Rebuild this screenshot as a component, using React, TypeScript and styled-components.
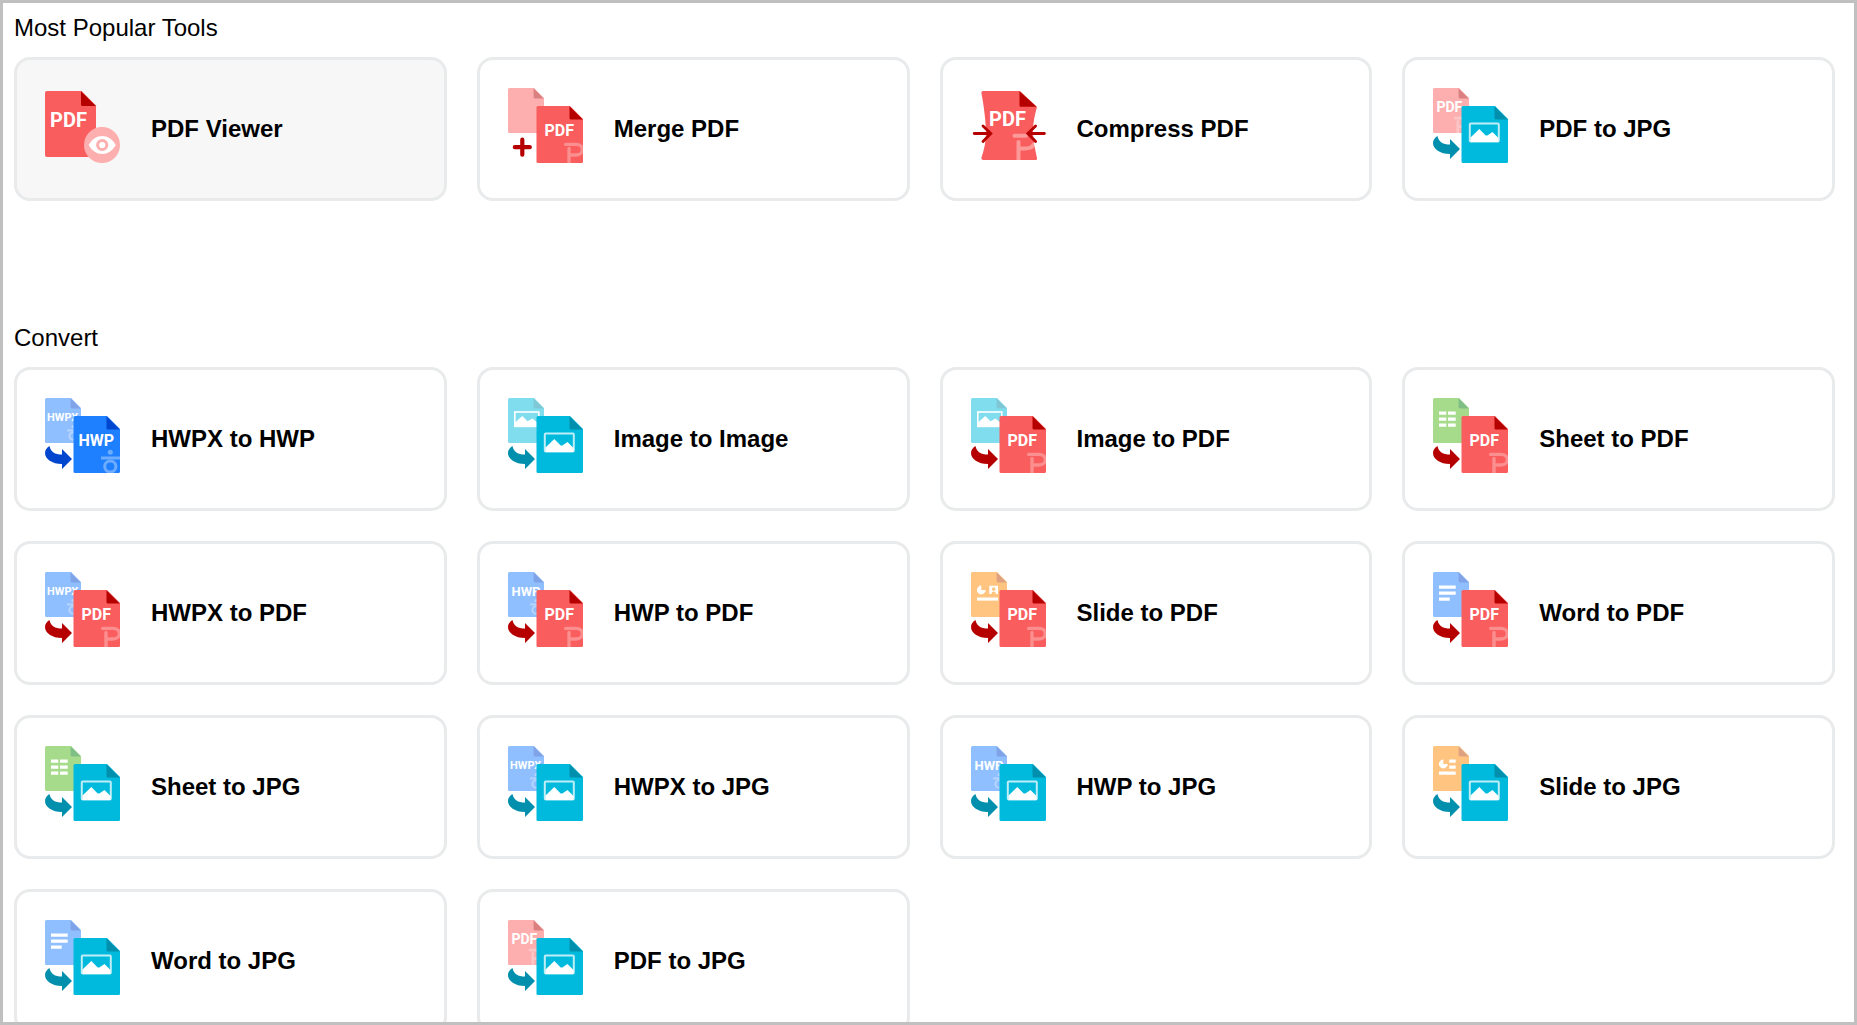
import React from "react";
import styled, { createGlobalStyle } from "styled-components";

const GlobalStyle = createGlobalStyle`
  *, *::before, *::after {
    box-sizing: border-box;
  }
  body {
    margin: 0;
    background: #ffffff;
    color: #000000;
    font-family: "Liberation Sans", Arial, Helvetica, sans-serif;
  }
`;

const Frame = styled.main`
  display: flex;
  flex-direction: column;
  gap: 122px;
  height: 100vh;
  overflow: hidden;
  padding: 10px 19px 0 11px;
  border: 3px solid #c0c0c0;
  background: #ffffff;
`;

const Section = styled.section`
  display: flex;
  flex-direction: column;
  gap: 14px;
`;

const Heading = styled.h2`
  margin: 0;
  font-size: 24px;
  font-weight: 400;
  line-height: 30px;
`;

const Grid = styled.ul`
  display: grid;
  grid-template-columns: repeat(4, minmax(0, 1fr));
  gap: 30px;
  margin: 0;
  padding: 0;
  list-style: none;
`;

const Card = styled.a<{ $active?: boolean }>`
  display: flex;
  align-items: center;
  gap: 31px;
  padding: 28px;
  border: 3px solid #e8eaeb;
  border-radius: 16px;
  background: ${(p) => (p.$active ? "#f7f7f7" : "#ffffff")};
  color: inherit;
  text-decoration: none;

  &:hover {
    background: #f7f7f7;
  }
`;

const IconBox = styled.span`
  display: flex;
  flex: none;
  padding-bottom: 7px;
`;

const Label = styled.span`
  font-size: 24px;
  font-weight: 700;
  line-height: 30px;
`;

const Mark = styled.text`
  font-family: Roboto, "Open Sans", sans-serif;
  font-weight: 700;
  fill: #ffffff;
`;

type Front = "hwp" | "jpg" | "pdf";
type Back = "hwpx" | "hwp" | "image" | "sheet" | "slide" | "slideList" | "word" | "pdf" | "blank";

const frontColors: Record<Front, [string, string]> = {
  hwp: ["#1f80ff", "#0046cf"],
  jpg: ["#00badd", "#008fac"],
  pdf: ["#fa5d5d", "#b60000"],
};

const backColors: Record<Back, [string, string]> = {
  hwpx: ["#8fbfff", "#80a2e7"],
  hwp: ["#8fbfff", "#80a2e7"],
  word: ["#8fbfff", "#80a2e7"],
  image: ["#80ddee", "#7fc7d4"],
  sheet: ["#a6db8c", "#7fbf86"],
  slide: ["#ffc480", "#dfa281"],
  slideList: ["#ffc480", "#dfa281"],
  pdf: ["#fdaeae", "#da8080"],
  blank: ["#fdaeae", "#da8080"],
};

const Hieut = () => (
  <g opacity="0.35">
    <circle cx="65.3" cy="54.3" r="2.5" fill="#ffffff" />
    <path d="M56 60H75" stroke="#ffffff" strokeWidth="3" />
    <circle cx="65.3" cy="68.5" r="5.6" fill="none" stroke="#ffffff" strokeWidth="3" />
  </g>
);

const PolarisP = () => (
  <g opacity="0.3">
    <path
      d="M57.6 56.4H68C76.5 56.4 76.5 67 68 67H61V75M61 60.5V67"
      stroke="#ffffff"
      strokeWidth="3.4"
      strokeLinecap="round"
      strokeLinejoin="round"
      fill="none"
    />
  </g>
);

const Picture = () => (
  <g>
    <rect x="36.8" y="35.5" width="29" height="18" rx="1" fill="none" stroke="#ffffff" strokeWidth="2" opacity="0.75" />
    <path d="M37.5 49.5L46.3 41L52.7 47.4L54.3 47.4L59.5 44L65.5 50V54H37.5Z" fill="#ffffff" />
  </g>
);

const BackContent = ({ kind }: { kind: Back }) => {
  switch (kind) {
    case "hwpx":
    case "hwp":
      return (
        <g>
          {kind === "hwpx" ? (
            <Mark x="2" y="22.8" fontSize="11">HWPX</Mark>
          ) : (
            <Mark x="3.5" y="23.5" fontSize="13">HWP</Mark>
          )}
          <g transform="translate(-15 -7.2) scale(0.66)">
            <Hieut />
          </g>
        </g>
      );
    case "pdf":
      return (
        <g>
          <Mark x="3.5" y="24" fontSize="14">PDF</Mark>
          <g transform="translate(-24 -15) scale(0.8)">
            <PolarisP />
          </g>
        </g>
      );
    case "image":
      return (
        <g>
          <rect x="6.8" y="14" width="24" height="14.4" fill="none" stroke="#ffffff" strokeWidth="1.6" />
          <path d="M7 24.5L14.3 18L19.5 23.2L24.5 20.5L31 26V29H7Z" fill="#ffffff" />
        </g>
      );
    case "sheet":
      return <path d="M6 13.5h7.3v3.2H6zM15 13.5h7.7v3.2H15zM6 19.5h7.3v3.2H6zM15 19.5h7.7v3.2H15zM6 25.5h7.3v3.2H6zM15 25.5h7.7v3.2H15z" fill="#ffffff" />;
    case "word":
      return <path d="M6 13.5h16.7v3.2H6zM6 19.5h16.7v3.2H6zM6 25.5h10.7v3.2H6z" fill="#ffffff" />;
    case "slide":
      return (
        <g fill="#ffffff">
          <path d="M10.3 13.6V18H14.7A4.4 4.4 0 1 1 10.3 13.6Z" />
          <path fillRule="evenodd" d="M18.3 13.8H27V22H24.8C24.8 20.3 23.9 19.6 22.7 19.6C21.5 19.6 20.6 20.3 20.6 22H18.3ZM22.7 15.3A1.8 1.8 0 1 0 22.7 18.9A1.8 1.8 0 1 0 22.7 15.3Z" />
          <path d="M6 25.5H27V28.6H6Z" />
        </g>
      );
    case "slideList":
      return (
        <g fill="#ffffff">
          <path d="M10.3 13.6V18H14.7A4.4 4.4 0 1 1 10.3 13.6Z" />
          <path d="M16.3 13.5h6.4v3.2h-6.4zM16.3 19.5h6.4v3.2h-6.4zM6 25.5h16.7v3.2H6z" />
        </g>
      );
    default:
      return null;
  }
};

const PairIcon = ({ back, front }: { back: Back; front: Front }) => {
  const [backFill, backFold] = backColors[back];
  const [frontFill, frontFold] = frontColors[front];
  return (
    <svg width="75" height="75" viewBox="0 0 75 75" aria-hidden="true">
      <path d="M1.5 0H26L36 10V45H1.5A1.5 1.5 0 0 1 0 43.5V1.5A1.5 1.5 0 0 1 1.5 0Z" fill={backFill} />
      <path d="M25.6 0.3L35.7 10.4H27A1.4 1.4 0 0 1 25.6 9Z" fill={backFold} />
      <BackContent kind={back} />
      {back === "blank" ? (
        <path d="M14.3 51.7V66.7M6.8 59.2H21.8" stroke={frontFold} strokeWidth="4.2" strokeLinecap="round" />
      ) : (
        <path d="M4.5 48C5.5 54 10 56.5 17 56.5V51L27 61L17 71V66C7 66 0 61 0 55C0 52 2 49.5 4.5 48Z" fill={frontFold} />
      )}
      <path d="M30 18H62L75 31V73.5A1.5 1.5 0 0 1 73.5 75H30A1.5 1.5 0 0 1 28.5 73.5V19.5A1.5 1.5 0 0 1 30 18Z" fill={frontFill} />
      <path d="M61.5 18.2L74.8 31.4H63A1.5 1.5 0 0 1 61.5 29.9Z" fill={frontFold} />
      {front === "jpg" && <Picture />}
      {front === "hwp" && (
        <g>
          <Mark x="33.5" y="48" fontSize="16">HWP</Mark>
          <Hieut />
        </g>
      )}
      {front === "pdf" && (
        <g>
          <Mark x="36.5" y="48" fontSize="16">PDF</Mark>
          <PolarisP />
        </g>
      )}
    </svg>
  );
};

const ViewerIcon = () => (
  <svg width="75" height="75" viewBox="0 0 75 75" aria-hidden="true">
    <path d="M2 3H36.5L51 17.5V69H2A2 2 0 0 1 0 67V5A2 2 0 0 1 2 3Z" fill="#fa5d5d" />
    <path d="M36 3.2L50.8 18H37.5A1.5 1.5 0 0 1 36 16.5Z" fill="#b60000" />
    <Mark x="5" y="38.5" fontSize="20">PDF</Mark>
    <circle cx="57" cy="57" r="18" fill="#fdaeae" />
    <path d="M43.6 57C47 51 52 48 57.2 48S67.4 51 70.8 57C67.4 63 62.4 66 57.2 66S47 63 43.6 57Z" fill="#ffffff" />
    <circle cx="57.2" cy="57" r="4.6" fill="none" stroke="#fdaeae" strokeWidth="3" />
  </svg>
);

const CompressIcon = () => (
  <svg width="75" height="75" viewBox="0 0 75 75" aria-hidden="true">
    <path d="M12.3 3H49L66 19C64 26 62 34 62 43S64 61 66 70A1.6 1.6 0 0 1 64.4 72H12.3A1.8 1.8 0 0 1 10.5 69.6C13 62 15 54 15 45S13 18 10.4 5A1.8 1.8 0 0 1 12.3 3Z" fill="#fa5d5d" />
    <path d="M48.5 3.2L65.6 18.8H50A1.5 1.5 0 0 1 48.5 17.3Z" fill="#b60000" />
    <Mark x="18" y="37.5" fontSize="20">PDF</Mark>
    <g opacity="0.38">
      <path
        d="M43.5 47.8H55M47.5 72V60.5H54C58 60.5 61.5 59 62.6 56.5M47.5 54V60.5"
        stroke="#ffffff"
        strokeWidth="4"
        strokeLinecap="round"
        fill="none"
      />
    </g>
    <g stroke="#b60000" strokeWidth="2.8" fill="none" strokeLinecap="round">
      <path d="M3.2 45.5H19M12 38L19.8 45.5L12 53.5" />
      <path d="M73.4 45.5H58M64.6 38L56.8 45.5L64.6 53.5" />
    </g>
  </svg>
);

type Tool = { label: string; icon: React.ReactNode; active?: boolean };

const popular: Tool[] = [
  { label: "PDF Viewer", icon: <ViewerIcon />, active: true },
  { label: "Merge PDF", icon: <PairIcon back="blank" front="pdf" /> },
  { label: "Compress PDF", icon: <CompressIcon /> },
  { label: "PDF to JPG", icon: <PairIcon back="pdf" front="jpg" /> },
];

const convert: Tool[] = [
  { label: "HWPX to HWP", icon: <PairIcon back="hwpx" front="hwp" /> },
  { label: "Image to Image", icon: <PairIcon back="image" front="jpg" /> },
  { label: "Image to PDF", icon: <PairIcon back="image" front="pdf" /> },
  { label: "Sheet to PDF", icon: <PairIcon back="sheet" front="pdf" /> },
  { label: "HWPX to PDF", icon: <PairIcon back="hwpx" front="pdf" /> },
  { label: "HWP to PDF", icon: <PairIcon back="hwp" front="pdf" /> },
  { label: "Slide to PDF", icon: <PairIcon back="slide" front="pdf" /> },
  { label: "Word to PDF", icon: <PairIcon back="word" front="pdf" /> },
  { label: "Sheet to JPG", icon: <PairIcon back="sheet" front="jpg" /> },
  { label: "HWPX to JPG", icon: <PairIcon back="hwpx" front="jpg" /> },
  { label: "HWP to JPG", icon: <PairIcon back="hwp" front="jpg" /> },
  { label: "Slide to JPG", icon: <PairIcon back="slideList" front="jpg" /> },
  { label: "Word to JPG", icon: <PairIcon back="word" front="jpg" /> },
  { label: "PDF to JPG", icon: <PairIcon back="pdf" front="jpg" /> },
];

const ToolSection = ({ title, tools }: { title: string; tools: Tool[] }) => (
  <Section>
    <Heading>{title}</Heading>
    <Grid>
      {tools.map((tool) => (
        <li key={tool.label}>
          <Card href="#" $active={tool.active}>
            <IconBox>{tool.icon}</IconBox>
            <Label>{tool.label}</Label>
          </Card>
        </li>
      ))}
    </Grid>
  </Section>
);

export default function App() {
  return (
    <>
      <GlobalStyle />
      <Frame>
        <ToolSection title="Most Popular Tools" tools={popular} />
        <ToolSection title="Convert" tools={convert} />
      </Frame>
    </>
  );
}
